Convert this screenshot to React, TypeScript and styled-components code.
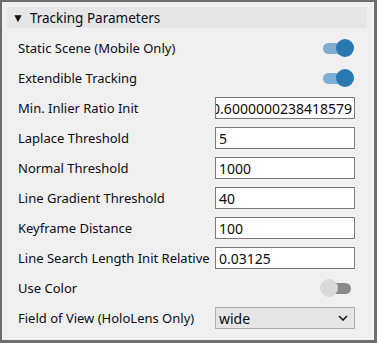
import styled, { createGlobalStyle } from 'styled-components'

const GlobalStyle = createGlobalStyle`
  html, body {
    margin: 0;
    padding: 0;
    background: #f0f0f0;
  }
  body {
    font-family: "Noto Sans", "Open Sans", sans-serif;
    font-size: 13px;
    color: #0c0c14;
  }
`

type Param =
  | { label: string; kind: 'toggle'; on: boolean }
  | { label: string; kind: 'text'; value: string; scrolled?: boolean }
  | { label: string; kind: 'select'; value: string }

const params: Param[] = [
  { label: 'Static Scene (Mobile Only)', kind: 'toggle', on: true },
  { label: 'Extendible Tracking', kind: 'toggle', on: true },
  { label: 'Min. Inlier Ratio Init', kind: 'text', value: '0.6000000238418579', scrolled: true },
  { label: 'Laplace Threshold', kind: 'text', value: '5' },
  { label: 'Normal Threshold', kind: 'text', value: '1000' },
  { label: 'Line Gradient Threshold', kind: 'text', value: '40' },
  { label: 'Keyframe Distance', kind: 'text', value: '100' },
  { label: 'Line Search Length Init Relative', kind: 'text', value: '0.03125' },
  { label: 'Use Color', kind: 'toggle', on: false },
  { label: 'Field of View (HoloLens Only)', kind: 'select', value: 'wide' },
]

const Control = ({ p }: { p: Param }) => {
  if (p.kind === 'toggle') {
    return (
      <ToggleCell>
        <Toggle $on={p.on}>
          <Knob $on={p.on} />
        </Toggle>
      </ToggleCell>
    )
  }
  if (p.kind === 'select') {
    return (
      <Select>
        <span>{p.value}</span>
        <svg width="10" height="6" viewBox="0 0 10 6">
          <path d="M1 1 L5 5 L9 1" fill="none" stroke="#1a1a1a" strokeWidth="1.6" />
        </svg>
      </Select>
    )
  }
  return (
    <Field $scrolled={!!p.scrolled}>
      <span>{p.value}</span>
    </Field>
  )
}

export default function App() {
  return (
    <>
      <GlobalStyle />
      <Frame>
        <Header>
          <Arrow>▼</Arrow>
          Tracking Parameters
        </Header>
        <List>
          {params.map((p) => (
            <Row key={p.label}>
              <Label>{p.label}</Label>
              <Control p={p} />
            </Row>
          ))}
        </List>
      </Frame>
    </>
  )
}

const Frame = styled.div`
  box-sizing: border-box;
  width: 377px;
  height: 343px;
  background: #f0f0f0;
  border: 2px solid #6e6e6e;
  border-right-width: 3px;
  border-bottom-width: 3px;
  padding: 5px 7px 0 5px;
  overflow: hidden;
  box-shadow: inset -1px 0 0 #fbfbfb;
`

const Header = styled.div`
  height: 21px;
  background: #e6e6e6;
  display: flex;
  align-items: center;
  padding-left: 5px;
  font-size: 13.5px;
`

const Arrow = styled.span`
  font-size: 12px;
  margin-right: 6px;
  color: #111;
`

const List = styled.div`
  padding: 5px 12px 0 11px;
`

const Row = styled.div`
  height: 30px;
  display: grid;
  grid-template-columns: 1fr 140px;
  align-items: center;
`

const Label = styled.div`
  white-space: nowrap;
  overflow: hidden;
`

const ToggleCell = styled.div`
  display: flex;
  justify-content: flex-end;
  padding-right: 1px;
`

const Toggle = styled.div<{ $on: boolean }>`
  position: relative;
  width: 34px;
  height: 18px;
  &::before {
    content: '';
    position: absolute;
    left: ${(p) => (p.$on ? '3px' : '5px')};
    right: 3px;
    top: 4px;
    height: 11px;
    border-radius: 6px;
    background: ${(p) => (p.$on ? '#7eaed3' : '#8a8a8a')};
  }
`

const Knob = styled.div<{ $on: boolean }>`
  position: absolute;
  top: 0;
  ${(p) => (p.$on ? 'right: 0;' : 'left: 0;')}
  width: 18px;
  height: 18px;
  border-radius: 50%;
  background: ${(p) => (p.$on ? '#2a78b0' : '#d9d9d9')};
`

const Field = styled.div<{ $scrolled: boolean }>`
  box-sizing: border-box;
  height: 22px;
  border: 1px solid #7a7a7a;
  background: #fff;
  display: flex;
  align-items: center;
  justify-content: ${(p) => (p.$scrolled ? 'flex-end' : 'flex-start')};
  padding: 0 ${(p) => (p.$scrolled ? '2px' : '3px')};
  overflow: hidden;
  white-space: nowrap;
  font-size: 14px;
  span {
    flex-shrink: 0;
  }
`

const Select = styled.div`
  box-sizing: border-box;
  height: 22px;
  border: 1px solid #adadad;
  background: #e5e5e5;
  display: flex;
  align-items: center;
  justify-content: space-between;
  padding: 0 6px 0 3px;
  font-size: 14px;
`
